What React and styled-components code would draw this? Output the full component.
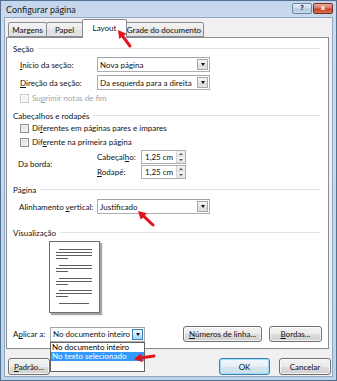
import React from 'react';
import styled, { createGlobalStyle } from 'styled-components';

const Global = createGlobalStyle`
  html, body { margin: 0; padding: 0; }
  body { font-family: Lato, "Open Sans", sans-serif; font-size: 8px; color: #111; }
  * { box-sizing: border-box; }
`;

const Window = styled.div`
  position: relative;
  width: 337px;
  height: 381px;
  background: linear-gradient(180deg, #c3d6ec 0%, #cddcee 6%, #bfd3ea 100%);
  border: 1px solid #52708f;
  display: flex;
  flex-direction: column;
  padding: 0 3px 3px 3px;
  overflow: hidden;
`;

const TitleBar = styled.div`
  height: 16px;
  display: flex;
  align-items: flex-start;
  justify-content: space-between;
`;

const Title = styled.span`
  font-size: 9px;
  margin: 3px 0 0 2px;
  color: #1e1e1e;
`;

const CaptionButtons = styled.div`
  display: flex;
  gap: 1px;
  margin-top: 2px;
`;

const CaptionButton = styled.span`
  width: ${p => p.$w}px;
  height: 11px;
  border: 1px solid ${p => (p.$close ? '#7a2c22' : '#6d86a3')};
  border-radius: 2px;
  background: ${p =>
    p.$close
      ? 'linear-gradient(180deg,#e9a99c 0%,#d8786a 45%,#c4432e 55%,#d4764a 100%)'
      : 'linear-gradient(180deg,#e6eef7 0%,#cddbea 45%,#b4c8de 55%,#c9dbee 100%)'};
  color: ${p => (p.$close ? '#fff' : '#2a3d55')};
  font-family: "DejaVu Sans", sans-serif;
  font-weight: bold;
  font-size: 7px;
  line-height: 9px;
  text-align: center;
`;

const Client = styled.div`
  flex: 1;
  background: #f0f0f0;
  border: 1px solid #8fa6c1;
  display: flex;
  flex-direction: column;
`;

const TabRow = styled.div`
  display: flex;
  align-items: flex-end;
  height: 20px;
  padding-left: 3px;
  position: relative;
  z-index: 2;
`;

const Tab = styled.div`
  width: ${p => p.$w}px;
  height: ${p => (p.$active ? 19 : 15)}px;
  margin: ${p => (p.$active ? '0 -2px 0 -2px' : '0 0 1px 0')};
  border: 1px solid #898c95;
  border-bottom: ${p => (p.$active ? 'none' : '1px solid #898c95')};
  border-radius: 2px 2px 0 0;
  background: ${p => (p.$active ? '#fff' : 'linear-gradient(180deg,#f3f3f3 0%,#ebebeb 50%,#dedede 51%,#e6e6e6 100%)')};
  display: flex;
  align-items: center;
  justify-content: center;
  white-space: nowrap;
  padding-bottom: ${p => (p.$active ? 2 : 0)}px;
  position: relative;
  z-index: ${p => (p.$active ? 3 : 1)};
  & + & { margin-left: ${p => (p.$active ? -2 : -1)}px; }
`;

const Panel = styled.div`
  position: relative;
  z-index: 1;
  margin: -1px 3px 0 1px;
  height: 312px;
  background: #fff;
  border: 1px solid #898c95;
  padding: 5px 6px 0 6px;
  display: flex;
  flex-direction: column;
`;

const GroupHeader = styled.div`
  display: flex;
  align-items: center;
  gap: 4px;
  height: 11px;
  margin-top: ${p => p.$mt || 0}px;
  margin-right: 2px;
  white-space: nowrap;
  &::after {
    content: "";
    flex: 1;
    height: 1px;
    background: #dde3e8;
  }
`;

const FieldRow = styled.div`
  display: flex;
  align-items: center;
  height: ${p => p.$h || 15}px;
  margin-top: ${p => p.$mt || 0}px;
  padding-left: ${p => (p.$indent == null ? 7 : p.$indent)}px;
  color: ${p => (p.$disabled ? '#a3a3a3' : '#111')};
  white-space: nowrap;
`;

const Label = styled.span`
  width: ${p => p.$w}px;
  flex: none;
  white-space: nowrap;
`;

const SelectBox = styled.div`
  position: relative;
  width: ${p => p.$w}px;
  height: 15px;
  border: 1px solid #abadb3;
  border-top-color: #a0a3aa;
  background: #fff;
  display: flex;
  align-items: center;
  padding: 0 1px 0 2px;
`;

const SelectText = styled.span`
  flex: 1;
  white-space: nowrap;
  overflow: hidden;
`;

const DropButton = styled.span`
  width: 11px;
  height: 11px;
  flex: none;
  border: 1px solid ${p => (p.$hot ? '#3c7fb1' : '#a7a7a7')};
  background: ${p =>
    p.$hot
      ? 'linear-gradient(180deg,#eaf6fd 0%,#d9f0fc 50%,#bee6fd 51%,#a7d9f5 100%)'
      : 'linear-gradient(180deg,#f6f6f6 0%,#e8e8e8 50%,#dadada 51%,#e4e4e4 100%)'};
  display: flex;
  align-items: center;
  justify-content: center;
  &::after {
    content: "";
    border-left: 2.5px solid transparent;
    border-right: 2.5px solid transparent;
    border-top: 3px solid #111;
  }
`;

const DropList = styled.div`
  position: absolute;
  left: -1px;
  top: 14px;
  width: ${p => p.$w}px;
  height: 30px;
  background: #fff;
  border: 1px solid #646464;
  z-index: 10;
  display: flex;
  flex-direction: column;
`;

const DropItem = styled.div`
  height: 9px;
  line-height: 9px;
  padding-left: 1px;
  white-space: nowrap;
  background: ${p => (p.$sel ? '#3399ff' : 'transparent')};
  color: ${p => (p.$sel ? '#fff' : '#000')};
`;

const Check = styled.span`
  width: 9px;
  height: 9px;
  flex: none;
  border: 1px solid ${p => (p.$disabled ? '#c9c9c9' : '#8f8f8f')};
  background: ${p => (p.$disabled ? '#f4f4f4' : 'linear-gradient(135deg,#dcdcdc 0%,#f6f6f6 100%)')};
  margin-right: 3px;
  box-shadow: inset 0 0 0 1px ${p => (p.$disabled ? '#fff' : '#f0f0f0')};
`;

const BorderBlock = styled.div`
  display: flex;
  align-items: center;
  margin-top: 2px;
  padding-left: 5px;
`;

const SpinGroup = styled.div`
  display: flex;
  flex-direction: column;
  gap: 2px;
`;

const SpinRow = styled.div`
  display: flex;
  align-items: center;
  height: 13px;
`;

const SpinBox = styled.div`
  width: 45px;
  height: 14px;
  border: 1px solid #abadb3;
  background: #fff;
  display: flex;
  align-items: stretch;
  padding-left: 3px;
`;

const SpinText = styled.span`
  flex: 1;
  line-height: 12px;
  white-space: nowrap;
`;

const SpinArrows = styled.span`
  width: 9px;
  display: flex;
  flex-direction: column;
  border-left: 1px solid #d6d6d6;
`;

const SpinHalf = styled.span`
  flex: 1;
  display: flex;
  align-items: center;
  justify-content: center;
  background: linear-gradient(180deg, #f4f4f4, #e2e2e2);
  &::after {
    content: "";
    border-left: 2px solid transparent;
    border-right: 2px solid transparent;
    ${p => (p.$up ? 'border-bottom: 2px solid #555;' : 'border-top: 2px solid #555;')}
  }
`;

const PreviewPage = styled.div`
  width: 51px;
  height: 72px;
  margin: 3px 0 0 36px;
  border: 1px solid #6f6f6f;
  background: #fff;
  box-shadow: 2px 2px 1px #a5a5a5;
  padding: 7px 7px 8px 6px;
  display: flex;
  flex-direction: column;
  justify-content: space-between;
`;

const ParaGroup = styled.div`
  display: flex;
  flex-direction: column;
  gap: 2px;
`;

const TextLine = styled.div`
  height: 1px;
  background: #5e5e5e;
  width: ${p => p.$w || 36}px;
  margin-left: ${p => p.$ml || 0}px;
`;

const ApplyRow = styled.div`
  display: flex;
  align-items: center;
  margin-top: 13px;
  height: 16px;
`;

const Spacer = styled.div`
  flex: 1;
`;

const Button = styled.button`
  height: ${p => p.$h || 17}px;
  width: ${p => p.$w}px;
  font: inherit;
  padding: 0;
  color: #111;
  margin-left: ${p => p.$ml || 0}px;
  border: 1px solid ${p => (p.$default ? '#3c7fb1' : '#707070')};
  border-radius: 3px;
  background: ${p =>
    p.$default
      ? 'linear-gradient(180deg,#f4f9fc 0%,#e6f0f6 50%,#d4e4ee 51%,#cbe0ec 100%)'
      : 'linear-gradient(180deg,#f2f2f2 0%,#ebebeb 50%,#dddddd 51%,#cfcfcf 100%)'};
  box-shadow: inset 0 0 0 1px ${p => (p.$default ? '#9fdcf6' : 'rgba(255,255,255,0.75)')};
  white-space: nowrap;
`;

const Footer = styled.div`
  display: flex;
  align-items: center;
  margin-top: 9px;
  padding: 0 1px 0 3px;
`;

const Arrows = styled.svg`
  position: absolute;
  left: 0;
  top: 0;
  pointer-events: none;
  z-index: 50;
`;

function Arrow({ x1, y1, x2, y2 }) {
  const dx = x2 - x1;
  const dy = y2 - y1;
  const len = Math.hypot(dx, dy);
  const ux = dx / len;
  const uy = dy / len;
  const hl = 8;
  const hw = 4.5;
  const bx = x2 - ux * hl;
  const by = y2 - uy * hl;
  const pts = [
    [x2, y2],
    [bx - uy * hw, by + ux * hw],
    [bx + uy * hw, by - ux * hw],
  ]
    .map(p => p.join(','))
    .join(' ');
  return (
    <g>
      <line x1={x1} y1={y1} x2={bx} y2={by} stroke="#e3121b" strokeWidth="3" strokeLinecap="round" />
      <polygon points={pts} fill="#e3121b" />
    </g>
  );
}

function Select({ w, value, hot, children }) {
  return (
    <SelectBox $w={w}>
      <SelectText>{value}</SelectText>
      <DropButton $hot={hot} />
      {children}
    </SelectBox>
  );
}

function Spin({ value }) {
  return (
    <SpinBox>
      <SpinText>{value}</SpinText>
      <SpinArrows>
        <SpinHalf $up />
        <SpinHalf />
      </SpinArrows>
    </SpinBox>
  );
}

export default function App() {
  return (
    <>
      <Global />
      <Window>
        <TitleBar>
          <Title>Configurar página</Title>
          <CaptionButtons>
            <CaptionButton $w={20}>?</CaptionButton>
            <CaptionButton $w={20} $close>x</CaptionButton>
          </CaptionButtons>
        </TitleBar>
        <Client>
          <TabRow>
            <Tab $w={39}>Margens</Tab>
            <Tab $w={37}>Papel</Tab>
            <Tab $w={45} $active>Layout</Tab>
            <Tab $w={80}>Grade do documento</Tab>
          </TabRow>
          <Panel>
            <GroupHeader>Seção</GroupHeader>
            <FieldRow $mt={3}>
              <Label $w={77}><u>I</u>nício da seção:</Label>
              <Select w={113} value="Nova página" />
            </FieldRow>
            <FieldRow $mt={3}>
              <Label $w={77}><u>D</u>ireção da seção:</Label>
              <Select w={113} value="Da esquerda para a direita" />
            </FieldRow>
            <FieldRow $mt={2} $h={12} $disabled>
              <Check $disabled />
              <span>Su<u>p</u>rimir notas de fim</span>
            </FieldRow>

            <GroupHeader $mt={6}>Cabeçalhos e rodapés</GroupHeader>
            <FieldRow $mt={1} $h={12}>
              <Check />
              <span>Di<u>f</u>erentes em páginas pares e ímpares</span>
            </FieldRow>
            <FieldRow $mt={2} $h={12}>
              <Check />
              <span>Dif<u>e</u>rente na primeira página</span>
            </FieldRow>
            <BorderBlock>
              <Label $w={79}>Da borda:</Label>
              <SpinGroup>
                <SpinRow>
                  <Label $w={44}>Cabeçal<u>h</u>o:</Label>
                  <Spin value="1,25 cm" />
                </SpinRow>
                <SpinRow>
                  <Label $w={44}><u>R</u>odapé:</Label>
                  <Spin value="1,25 cm" />
                </SpinRow>
              </SpinGroup>
            </BorderBlock>

            <GroupHeader $mt={6}>Página</GroupHeader>
            <FieldRow $mt={4} $indent={6}>
              <Label $w={78}>Alinhamento <u>v</u>ertical:</Label>
              <Select w={113} value="Justificado" />
            </FieldRow>

            <GroupHeader $mt={13}>Visualização</GroupHeader>
            <PreviewPage>
              <ParaGroup>
                <TextLine $w={33} $ml={3} />
                <TextLine />
                <TextLine />
                <TextLine $w={12} />
              </ParaGroup>
              <ParaGroup>
                <TextLine $w={33} $ml={3} />
                <TextLine />
                <TextLine $w={12} />
              </ParaGroup>
              <ParaGroup>
                <TextLine $w={33} $ml={3} />
                <TextLine />
                <TextLine $w={12} />
              </ParaGroup>
              <ParaGroup>
                <TextLine $w={33} $ml={3} />
                <TextLine />
                <TextLine $w={12} />
              </ParaGroup>
              <TextLine $w={30} $ml={3} />
            </PreviewPage>

            <ApplyRow>
              <Label $w={37}>A<u>p</u>licar a:</Label>
              <Select w={95} value="No documento inteiro" hot>
                <DropList $w={95}>
                  <DropItem>No documento inteiro</DropItem>
                  <DropItem $sel>No texto selecionado</DropItem>
                </DropList>
              </Select>
              <Spacer />
              <Button $w={79} $h={16}><u>N</u>úmeros de linha...</Button>
              <Button $w={53} $h={16} $ml={7}><u>B</u>ordas...</Button>
            </ApplyRow>
          </Panel>
          <Footer>
            <Button $w={42}><u>P</u>adrão...</Button>
            <Spacer />
            <Button $w={51} $default>OK</Button>
            <Button $w={52} $ml={9}>Cancelar</Button>
          </Footer>
        </Client>
        <Arrows width="337" height="381" viewBox="0 0 337 381">
          <Arrow x1={129} y1={45} x2={117} y2={29} />
          <Arrow x1={152} y1={224} x2={137} y2={210} />
          <Arrow x1={153} y1={355} x2={133} y2={358} />
        </Arrows>
      </Window>
    </>
  );
}
